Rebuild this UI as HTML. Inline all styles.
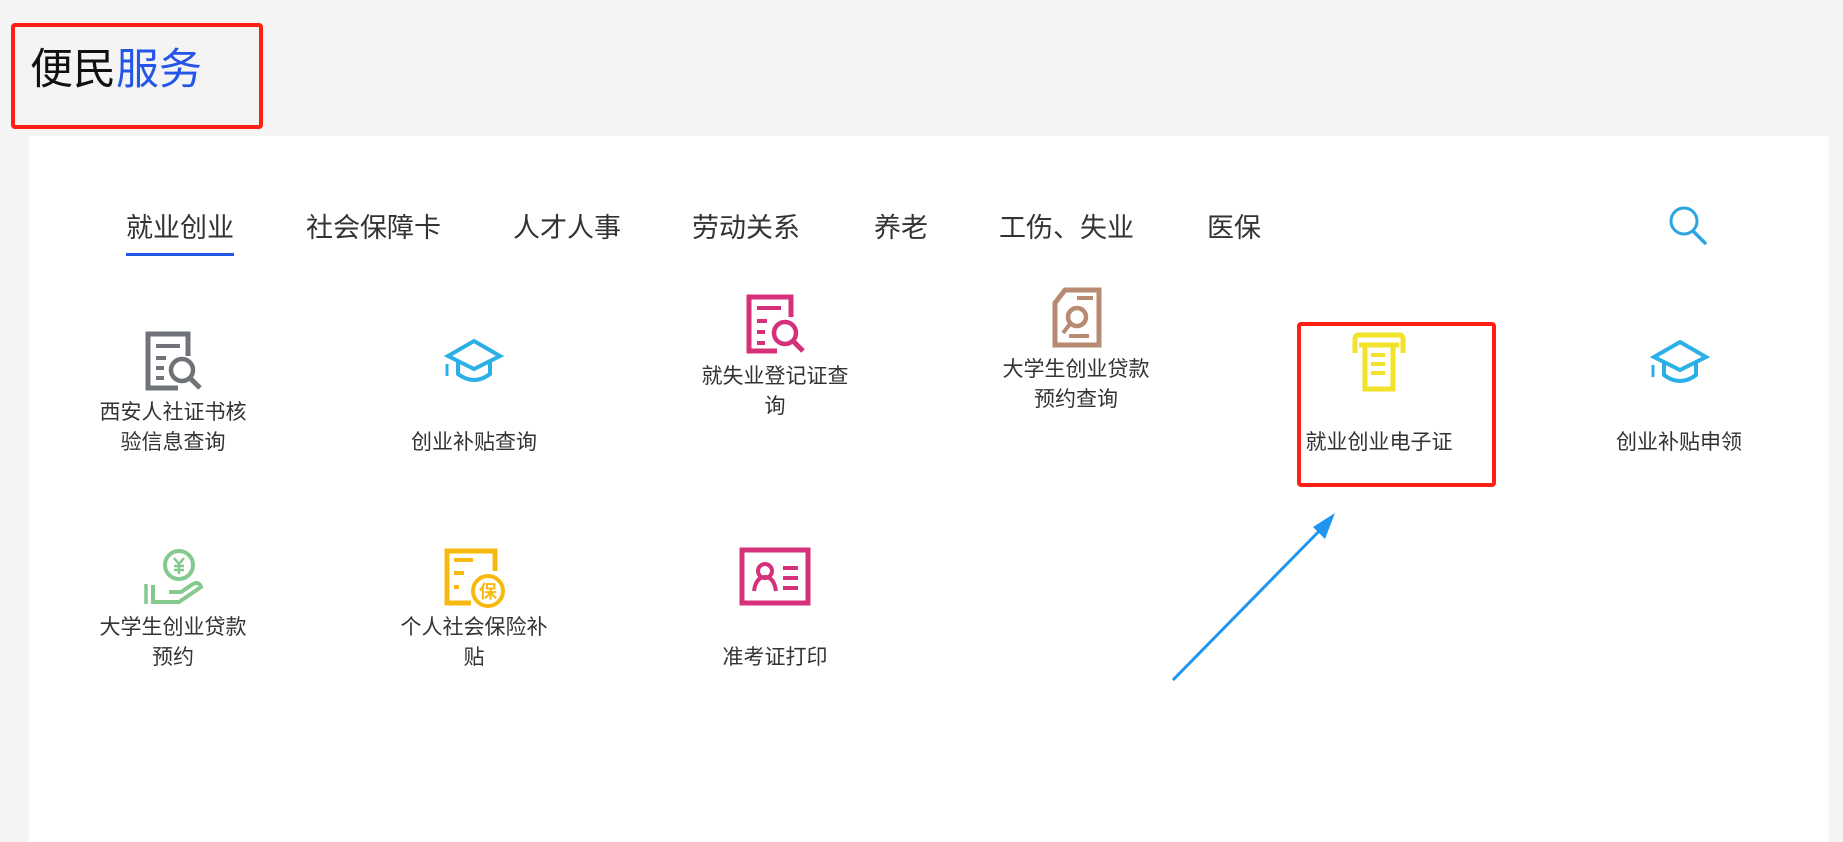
<!DOCTYPE html>
<html><head><meta charset="utf-8"><style>
*{margin:0;padding:0;box-sizing:border-box}
body{width:1843px;height:842px;background:#f4f4f4;position:relative;overflow:hidden;font-family:"Liberation Sans","Noto Sans CJK SC",sans-serif;color:#333}
.a{position:absolute}
.redbox{border:4px solid #ff2015;border-radius:4px}
.title{left:30px;top:43px;font-size:43px;line-height:54px;color:#111;white-space:nowrap}
.title span{color:#2356e6}
.panel{left:29px;top:136px;width:1800px;height:706px;background:#fff}
.tab{top:211px;font-size:27px;line-height:34px;color:#333;white-space:nowrap}
.lbl{font-size:21px;line-height:30px;color:#333;text-align:center;width:220px}
svg{position:absolute}
</style></head><body>
<div class="a redbox" style="left:11px;top:23px;width:252px;height:106px"></div>
<div class="a title">便民<span>服务</span></div>
<div class="a panel"></div>

<div class="a tab" style="left:126px">就业创业</div>
<div class="a" style="left:126px;top:253px;width:108px;height:3px;background:#1f55e0"></div>
<div class="a tab" style="left:306px">社会保障卡</div>
<div class="a tab" style="left:513px">人才人事</div>
<div class="a tab" style="left:692px">劳动关系</div>
<div class="a tab" style="left:874px">养老</div>
<div class="a tab" style="left:999px">工伤、失业</div>
<div class="a tab" style="left:1207px">医保</div>
<svg style="left:1667px;top:205px" width="42" height="40" viewBox="0 0 42 40"><circle cx="17" cy="16" r="13" fill="none" stroke="#2aa5e0" stroke-width="3"/><path d="M26 26 L38 38" stroke="#2aa5e0" stroke-width="3.5" stroke-linecap="round"/></svg>

<svg style="left:144px;top:330px" width="60" height="62" viewBox="0 0 60 62"><path d="M34 58 H4 V4 H44 V26" fill="none" stroke="#6f7378" stroke-width="5"/><path d="M12 16h24M12 28h10M12 38h8M12 48h8" stroke="#6f7378" stroke-width="4"/><circle cx="38" cy="40" r="11" fill="none" stroke="#6f7378" stroke-width="4.5"/><path d="M46 48 L56 58" stroke="#6f7378" stroke-width="5"/></svg>
<div class="a lbl" style="left:63px;top:398px">西安人社证书核<br>验信息查询</div>
<svg style="left:444px;top:338px" width="60" height="46" viewBox="0 0 60 46"><path d="M30 3 L56 18 L30 31 L4 18 Z" fill="none" stroke="#2ab0e6" stroke-width="4"/><path d="M14 24 V36 Q30 48 46 36 V24" fill="none" stroke="#2ab0e6" stroke-width="4"/><path d="M3 26v12" stroke="#2ab0e6" stroke-width="3"/></svg>
<div class="a lbl" style="left:364px;top:428px">创业补贴查询</div>
<svg style="left:745px;top:293px" width="62" height="62" viewBox="0 0 62 62"><path d="M32 58 H4 V4 H46 V24" fill="none" stroke="#d6307a" stroke-width="5"/><path d="M12 15h24M12 28h10M12 39h8M12 50h8" stroke="#d6307a" stroke-width="4"/><circle cx="40" cy="40" r="11" fill="none" stroke="#d6307a" stroke-width="4.5"/><path d="M48 48 L58 58" stroke="#d6307a" stroke-width="5"/></svg>
<div class="a lbl" style="left:665px;top:362px">就失业登记证查<br>询</div>
<svg style="left:1051px;top:287px" width="52" height="62" viewBox="0 0 52 62"><path d="M14 3 H48 V58 H4 V16 Z" fill="none" stroke="#b78a72" stroke-width="5"/><path d="M26 11h16M18 49h20" stroke="#b78a72" stroke-width="4"/><circle cx="26" cy="30" r="9" fill="none" stroke="#b78a72" stroke-width="4.5"/><path d="M19 37 L12 46" stroke="#b78a72" stroke-width="4"/></svg>
<div class="a lbl" style="left:966px;top:355px">大学生创业贷款<br>预约查询</div>
<div class="a redbox" style="left:1297px;top:322px;width:199px;height:165px"></div>
<svg style="left:1349px;top:331px" width="60" height="62" viewBox="0 0 60 62"><path d="M6 22 V8 Q6 4 10 4 H50 Q54 4 54 8 V22" fill="none" stroke="#f2e32a" stroke-width="5"/><path d="M10 14 H50 M16 14 V58 H44 V14" fill="none" stroke="#f2e32a" stroke-width="5"/><path d="M22 24h14M22 33h14M22 42h14" stroke="#f2e32a" stroke-width="4"/></svg>
<div class="a lbl" style="left:1269px;top:428px">就业创业电子证</div>
<svg style="left:1650px;top:339px" width="60" height="46" viewBox="0 0 60 46"><path d="M30 3 L56 18 L30 31 L4 18 Z" fill="none" stroke="#2ab0e6" stroke-width="4"/><path d="M14 24 V36 Q30 48 46 36 V24" fill="none" stroke="#2ab0e6" stroke-width="4"/><path d="M3 26v12" stroke="#2ab0e6" stroke-width="3"/></svg>
<div class="a lbl" style="left:1569px;top:428px">创业补贴申领</div>

<svg style="left:1165px;top:505px" width="180" height="180" viewBox="0 0 180 180"><path d="M8 175 L165 15" stroke="#1e95f0" stroke-width="3"/><path d="M170 8 L148 22 L160 34 Z" fill="#1e95f0"/></svg>

<svg style="left:143px;top:547px" width="62" height="60" viewBox="0 0 62 60"><circle cx="36" cy="18" r="14" fill="none" stroke="#86c98f" stroke-width="4"/><path d="M31 11l5 6 5-6M36 17v10M31 19h10M31 23h10" fill="none" stroke="#86c98f" stroke-width="2.5"/><path d="M3 37v20" stroke="#86c98f" stroke-width="3.5"/><path d="M10 38 V55 H36 L58 40 Q56 34 50 37 L38 45 H26" fill="none" stroke="#86c98f" stroke-width="4"/></svg>
<div class="a lbl" style="left:63px;top:613px">大学生创业贷款<br>预约</div>
<svg style="left:443px;top:547px" width="64" height="62" viewBox="0 0 64 62"><path d="M40 4 H4 V56 H28" fill="none" stroke="#f7b90f" stroke-width="5"/><path d="M40 4 H52 V24" fill="none" stroke="#f7b90f" stroke-width="5"/><path d="M11 13h19M11 26h10M11 40h5" stroke="#f7b90f" stroke-width="4"/><circle cx="45" cy="44" r="15" fill="#fff" stroke="#f7b90f" stroke-width="4"/><text x="45" y="51" text-anchor="middle" font-size="18" fill="#f7b90f" font-family="Noto Sans CJK SC,sans-serif" font-weight="bold">保</text></svg>
<div class="a lbl" style="left:364px;top:613px">个人社会保险补<br>贴</div>
<svg style="left:739px;top:547px" width="72" height="60" viewBox="0 0 72 60"><rect x="3" y="3" width="66" height="53" fill="none" stroke="#d6307a" stroke-width="5"/><circle cx="26" cy="24" r="7" fill="none" stroke="#d6307a" stroke-width="4"/><path d="M15 44 Q17 30 26 30 Q35 30 37 44" fill="none" stroke="#d6307a" stroke-width="4"/><path d="M44 21h15M44 31h15M44 41h15" stroke="#d6307a" stroke-width="4"/></svg>
<div class="a lbl" style="left:665px;top:643px">准考证打印</div>
</body></html>
